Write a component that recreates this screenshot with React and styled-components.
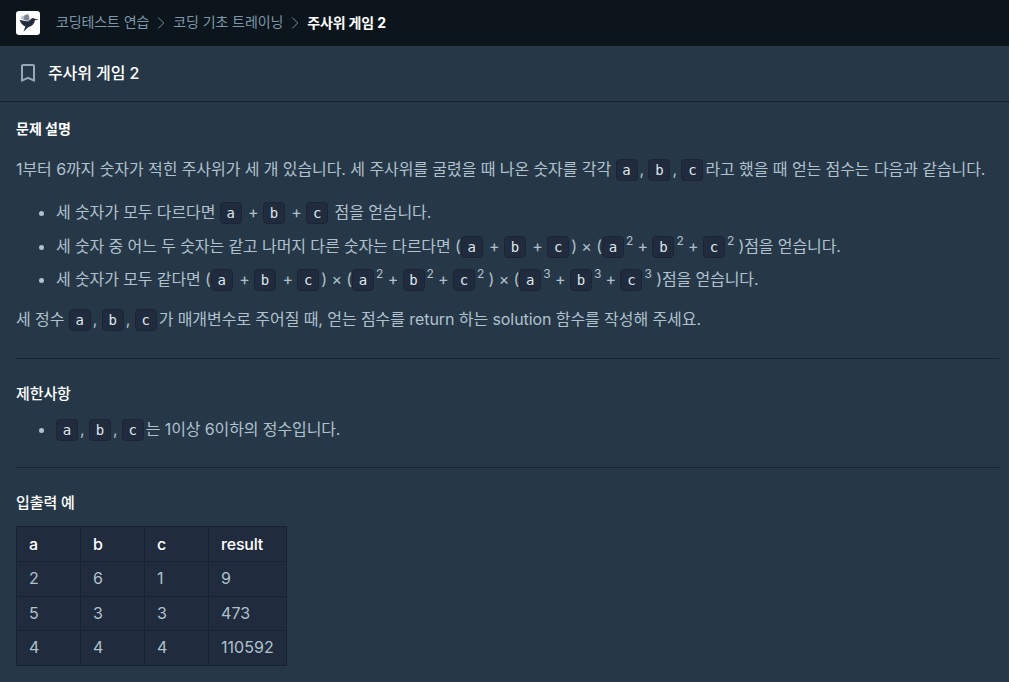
import React from 'react';
import styled, { createGlobalStyle } from 'styled-components';

const ROWS = [
  ['2', '6', '1', '9'],
  ['5', '3', '3', '473'],
  ['4', '4', '4', '110592'],
];

function BirdLogo() {
  return (
    <Logo viewBox="0 0 24 24">
      <path d="M5.8 4.6 8.2 5.2 7.6 8.6 5 7.4Z" fill="#b9bfc9" />
      <path d="M8.4 4.2 12.2 3 13.6 7.4 12.4 10.2 7.4 8.6Z" fill="#7c8696" />
      <path
        d="M3.6 9 12.2 10.4 15.6 7.6C16.4 6.9 17.6 6.9 18.4 7.7L22.8 8.6 18.9 9.2C18.4 12.6 16 15.2 12.2 16.2L7.4 20.8 9.4 15.6C6.8 14.4 4.6 12.2 3.6 9Z"
        fill="#202b3d"
      />
    </Logo>
  );
}

function Chevron() {
  return (
    <ChevronIcon viewBox="0 0 8 14">
      <path d="M1.2 1.5 6.7 7 1.2 12.5" fill="none" stroke="#78909f" />
    </ChevronIcon>
  );
}

function Bookmark() {
  return (
    <BookmarkIcon viewBox="0 0 24 24">
      <path
        d="M17 3H7c-1.1 0-2 .9-2 2v16l7-3 7 3V5c0-1.1-.9-2-2-2zm0 15-5-2.18L7 18V5h10v13z"
        fill="#98a8b9"
      />
    </BookmarkIcon>
  );
}

function App() {
  return (
    <>
      <GlobalStyle />
      <Page>
        <TopBar>
          <BirdLogo />
          <Crumb>코딩테스트 연습</Crumb>
          <Chevron />
          <Crumb>코딩 기초 트레이닝</Crumb>
          <Chevron />
          <Crumb $current>주사위 게임 2</Crumb>
        </TopBar>
        <TitleBar>
          <Bookmark />
          <Title>주사위 게임 2</Title>
        </TitleBar>
        <Content>
          <Heading $bold>문제 설명</Heading>
          <Paragraph>
            1부터 6까지 숫자가 적힌 주사위가 세 개 있습니다. 세 주사위를 굴렸을 때
            나온 숫자를 각각 <Code>a</Code>, <Code>b</Code>, <Code>c</Code>라고
            했을 때 얻는 점수는 다음과 같습니다.
          </Paragraph>
          <List>
            <Item>
              세 숫자가 모두 다르다면 <Code>a</Code> + <Code>b</Code> +{' '}
              <Code>c</Code> 점을 얻습니다.
            </Item>
            <Item>
              세 숫자 중 어느 두 숫자는 같고 나머지 다른 숫자는 다르다면 (
              <Code>a</Code> + <Code>b</Code> + <Code>c</Code>) × (
              <Code>a</Code>
              <Sup>2</Sup> + <Code>b</Code>
              <Sup>2</Sup> + <Code>c</Code>
              <Sup>2</Sup> )점을 얻습니다.
            </Item>
            <Item>
              세 숫자가 모두 같다면 (<Code>a</Code> + <Code>b</Code> +{' '}
              <Code>c</Code>) × (<Code>a</Code>
              <Sup>2</Sup> + <Code>b</Code>
              <Sup>2</Sup> + <Code>c</Code>
              <Sup>2</Sup> ) × (<Code>a</Code>
              <Sup>3</Sup> + <Code>b</Code>
              <Sup>3</Sup> + <Code>c</Code>
              <Sup>3</Sup> )점을 얻습니다.
            </Item>
          </List>
          <Paragraph>
            세 정수 <Code>a</Code>, <Code>b</Code>, <Code>c</Code>가 매개변수로
            주어질 때, 얻는 점수를 return 하는 solution 함수를 작성해 주세요.
          </Paragraph>
          <Divider />
          <Heading>제한사항</Heading>
          <List>
            <Item>
              <Code>a</Code>, <Code>b</Code>, <Code>c</Code>는 1이상 6이하의
              정수입니다.
            </Item>
          </List>
          <Divider />
          <Heading>입출력 예</Heading>
          <Table>
            <thead>
              <tr>
                <th>a</th>
                <th>b</th>
                <th>c</th>
                <th>result</th>
              </tr>
            </thead>
            <tbody>
              {ROWS.map(row => (
                <tr key={row[3]}>
                  {row.map((value, i) => (
                    <td key={i}>{value}</td>
                  ))}
                </tr>
              ))}
            </tbody>
          </Table>
        </Content>
      </Page>
    </>
  );
}

export default App;

const GlobalStyle = createGlobalStyle`
  * {
    box-sizing: border-box;
  }

  body {
    margin: 0;
    background-color: #263747;
    font-family: Inter, 'Noto Sans CJK KR', sans-serif;
    overflow: hidden;
  }
`;

const Page = styled.div`
  height: 682px;
  overflow: hidden;
  background-color: #263747;
  color: #b0c2ce;
  letter-spacing: -0.1px;
`;

const TopBar = styled.nav`
  display: flex;
  align-items: center;
  height: 46px;
  padding: 0 16px;
  background-color: #0c151c;
`;

const Logo = styled.svg`
  width: 24px;
  height: 24px;
  margin-right: 16px;
  border-radius: 3px;
  background-color: white;
`;

const Crumb = styled.span`
  padding-bottom: ${props => (props.$current ? 1 : 2)}px;
  color: ${props => (props.$current ? 'white' : '#7e98a9')};
  font-size: 14px;
  font-weight: ${props => (props.$current ? 700 : 400)};
  letter-spacing: ${props => (props.$current ? '-0.15px' : '-0.1px')};
  line-height: 20px;
  white-space: nowrap;
`;

const ChevronIcon = styled.svg`
  width: 8px;
  height: 14px;
  margin: 0 8px;
`;

const TitleBar = styled.header`
  display: flex;
  align-items: center;
  height: 56px;
  padding: 0 16px;
  border-bottom: 1px solid #172334;
`;

const BookmarkIcon = styled.svg`
  width: 24px;
  height: 24px;
  margin: 0 8px 2px 0;
`;

const Title = styled.h1`
  margin: 0;
  padding-bottom: 2px;
  color: white;
  font-size: 16px;
  font-weight: 500;
  line-height: 24px;
`;

const Content = styled.main`
  padding: 16px 10px 0 16px;
`;

const Heading = styled.h2`
  margin: 0 0 11.5px;
  color: white;
  font-size: ${props => (props.$bold ? 14 : 15)}px;
  font-weight: ${props => (props.$bold ? 700 : 500)};
  letter-spacing: ${props => (props.$bold ? 0 : '-0.1px')};
  line-height: 22px;
`;

const Paragraph = styled.p`
  height: 26px;
  margin: 14px 0 17px;
  font-size: 16px;
  letter-spacing: -0.08px;
  line-height: 26px;
  white-space: nowrap;

  ${Heading} + & {
    margin-top: 16px;
  }
`;

const List = styled.ul`
  margin: 0;
  padding-left: 40px;
`;

const Item = styled.li`
  height: 25.67px;
  font-size: 16px;
  letter-spacing: -0.11px;
  line-height: 26px;
  white-space: nowrap;

  & + & {
    margin-top: 8px;
  }
`;

const Code = styled.code`
  display: inline-block;
  width: 22px;
  height: 22px;
  margin-right: 2px;
  border: 1px solid #1b2436;
  border-radius: 4px;
  background-color: #202b3d;
  color: #dfe6ee;
  font-family: 'DejaVu Sans Mono', monospace;
  font-size: 14px;
  letter-spacing: 0;
  line-height: 20px;
  text-align: center;
`;

const Sup = styled.sup`
  position: relative;
  top: -7px;
  font-size: 12px;
  line-height: 0;
  vertical-align: baseline;
`;

const Divider = styled.hr`
  height: 1px;
  margin: 26px 0 24px;
  border: 0;
  background-color: #172334;

  ${List} + & {
    margin-top: 24.5px;
  }
`;

const Table = styled.table`
  margin-top: 12.5px;
  border-collapse: collapse;
  background-color: #202b3d;
  font-size: 16px;

  th,
  td {
    min-width: 64px;
    padding: 5px 12px;
    border: 1px solid #172334;
    text-align: left;
  }

  th {
    color: white;
    font-weight: 500;
    letter-spacing: -0.2px;
    line-height: 24px;
  }

  td {
    letter-spacing: 0.05px;
    line-height: 23.6px;
  }
`;
